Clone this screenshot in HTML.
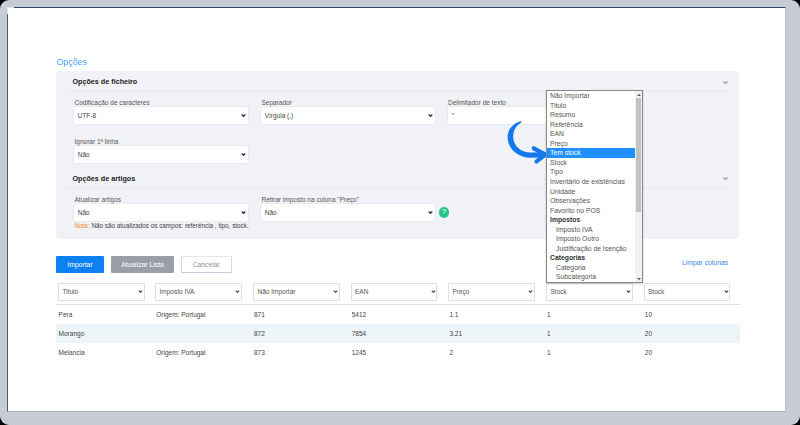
<!DOCTYPE html>
<html><head><meta charset="utf-8">
<style>
*{margin:0;padding:0;box-sizing:border-box}
html,body{width:800px;height:425px;overflow:hidden;background:#000}
body{font-family:"Liberation Sans",sans-serif;position:relative}
.frame{position:absolute;left:0;top:0;width:800px;height:425px;border-radius:9px;background:#c7ccd4}
.screen{position:absolute;left:7px;top:7px;width:779px;height:405px;background:#fff;border-top:1px solid #34486a;border-left:1px solid #4a5d7c;border-right:1px solid #bdc3cc;border-bottom:1px solid #aab1bc}
.a{position:absolute;white-space:nowrap}
.t{position:absolute;white-space:nowrap;line-height:1}
.panel{position:absolute;left:56px;top:71px;width:683px;height:168px;background:#f1f2f7;border-radius:4px}
.sep{position:absolute;height:2px;background:#ebedf2}
.h{font-weight:bold;font-size:7.2px;color:#222}
.lbl{font-size:6.5px;color:#555}
.inp{position:absolute;background:#fff;box-shadow:0 0 0 0.6px #e3e5eb,0 0 1.5px rgba(0,0,0,.08);border-radius:1.5px}
.inp span{position:absolute;left:3.7px;top:5.8px;font-size:6.5px;color:#444;line-height:1}
.chev{position:absolute;width:5px;height:3px}
.btn{position:absolute;top:256px;height:17px;border-radius:1px;font-size:6.8px;text-align:center;line-height:17px}
.sel{position:absolute;top:283px;height:17.5px;width:86.5px;background:#fff;border:1px solid #dcdfe4;border-radius:1px}
.sel span{position:absolute;left:3.5px;top:5.2px;font-size:6.5px;color:#555;line-height:1}
.cell{position:absolute;font-size:6.5px;color:#444;line-height:1}
.dd{position:absolute;left:546px;top:90px;width:97px;height:193px;background:#fff;border:1px solid #85888c;box-shadow:0 1px 2px rgba(0,0,0,.2)}
.it{position:absolute;left:3px;height:9.55px;font-size:6.8px;color:#5a5353;line-height:9.55px;white-space:nowrap}
</style></head>
<body>
<div class="frame"></div>
<div class="screen"></div>
<div class="a" style="left:7px;top:7px;width:7px;height:7px;background:#fff;border-top:1px solid #e3e6ea;border-left:1px solid #e3e6ea"></div>

<div class="t" style="left:56.5px;top:58px;font-size:8.8px;color:#4b9ff2">Opções</div>

<div class="panel"></div>
<div class="t h" style="left:72.5px;top:78px">Opções de ficheiro</div>
<div class="sep" style="left:67px;top:90px;width:662px"></div>
<svg class="chev" style="left:723px;top:80.5px" viewBox="0 0 5 3"><path d="M0.5 0.5 L2.5 2.5 L4.5 0.5" stroke="#9a9ca4" stroke-width="1.1" fill="none"/></svg>

<div class="t lbl" style="left:74.5px;top:100px">Codificação de caracteres</div>
<div class="inp" style="left:74px;top:107px;width:174px;height:17px"><span>UTF-8</span></div>
<svg class="chev" style="left:241px;top:114px" viewBox="0 0 5 3"><path d="M0.7 0.6 L2.5 2.3 L4.3 0.6" stroke="#333" stroke-width="1.4" fill="none"/></svg>

<div class="t lbl" style="left:261.5px;top:100px">Separador</div>
<div class="inp" style="left:261px;top:107px;width:174px;height:17px"><span>Vírgula (,)</span></div>
<svg class="chev" style="left:428px;top:114px" viewBox="0 0 5 3"><path d="M0.7 0.6 L2.5 2.3 L4.3 0.6" stroke="#333" stroke-width="1.4" fill="none"/></svg>

<div class="t lbl" style="left:448px;top:100px">Delimitador de texto</div>
<div class="inp" style="left:448px;top:107px;width:174px;height:17px"><span>"</span></div>

<div class="t lbl" style="left:74.5px;top:139px">Ignorar 1ª linha</div>
<div class="inp" style="left:74px;top:146px;width:174px;height:17px"><span>Não</span></div>
<svg class="chev" style="left:241px;top:153px" viewBox="0 0 5 3"><path d="M0.7 0.6 L2.5 2.3 L4.3 0.6" stroke="#333" stroke-width="1.4" fill="none"/></svg>

<div class="t h" style="left:72.5px;top:175px">Opções de artigos</div>
<div class="sep" style="left:67px;top:187px;width:662px"></div>
<svg class="chev" style="left:723px;top:177px" viewBox="0 0 5 3"><path d="M0.5 0.5 L2.5 2.5 L4.5 0.5" stroke="#9a9ca4" stroke-width="1.1" fill="none"/></svg>

<div class="t lbl" style="left:74.5px;top:196.5px">Atualizar artigos</div>
<div class="inp" style="left:74px;top:204px;width:174px;height:16.5px"><span>Não</span></div>
<svg class="chev" style="left:241px;top:211px" viewBox="0 0 5 3"><path d="M0.7 0.6 L2.5 2.3 L4.3 0.6" stroke="#333" stroke-width="1.4" fill="none"/></svg>
<div class="t lbl" style="left:74.5px;top:222.8px;color:#444;font-size:6.35px"><span style="color:#f08a24">Nota:</span> Não são atualizados os campos: referência , tipo, stock.</div>

<div class="t lbl" style="left:261.5px;top:196.5px">Retirar imposto na coluna "Preço"</div>
<div class="inp" style="left:261px;top:204px;width:174px;height:16.5px"><span>Não</span></div>
<svg class="chev" style="left:428px;top:211px" viewBox="0 0 5 3"><path d="M0.7 0.6 L2.5 2.3 L4.3 0.6" stroke="#333" stroke-width="1.4" fill="none"/></svg>
<div class="a" style="left:438.6px;top:207.1px;width:10.6px;height:10.6px;border-radius:50%;background:#25c68b;color:#fff;font-size:7.5px;text-align:center;line-height:10.6px">?</div>

<div class="btn" style="left:56px;width:48px;background:#0d80f2;color:#fff">Importar</div>
<div class="btn" style="left:111px;width:63px;background:#9a9ea6;color:#fff">Atualizar Lista</div>
<div class="btn" style="left:181px;width:50.5px;background:#fff;border:1px solid #d3d9e4;border-top-color:#e2e6ed;border-bottom-color:#c3cbda;color:#8c93a3;line-height:15px">Cancelar</div>

<div class="t" style="left:682px;top:260px;font-size:6.8px;color:#3d86e6">Limpar colunas</div>

<!-- table -->
<div class="a" style="left:56px;top:304px;width:684px;height:1px;background:#d9dce1"></div>
<div class="a" style="left:56px;top:324px;width:684px;height:19px;background:#edf5f9"></div>

<div class="sel" style="left:58px"><span>Titulo</span></div>
<svg class="chev" style="left:138.0px;top:289.8px" viewBox="0 0 5 3"><path d="M0.8 0.6 L2.5 2.3 L4.2 0.6" stroke="#444" stroke-width="1.15" fill="none"/></svg>
<div class="sel" style="left:155px"><span>Imposto IVA</span></div>
<svg class="chev" style="left:235.0px;top:289.8px" viewBox="0 0 5 3"><path d="M0.8 0.6 L2.5 2.3 L4.2 0.6" stroke="#444" stroke-width="1.15" fill="none"/></svg>
<div class="sel" style="left:253px"><span>Não Importar</span></div>
<svg class="chev" style="left:333.0px;top:289.8px" viewBox="0 0 5 3"><path d="M0.8 0.6 L2.5 2.3 L4.2 0.6" stroke="#444" stroke-width="1.15" fill="none"/></svg>
<div class="sel" style="left:350.5px"><span>EAN</span></div>
<svg class="chev" style="left:430.5px;top:289.8px" viewBox="0 0 5 3"><path d="M0.8 0.6 L2.5 2.3 L4.2 0.6" stroke="#444" stroke-width="1.15" fill="none"/></svg>
<div class="sel" style="left:448px"><span>Preço</span></div>
<svg class="chev" style="left:528.0px;top:289.8px" viewBox="0 0 5 3"><path d="M0.8 0.6 L2.5 2.3 L4.2 0.6" stroke="#444" stroke-width="1.15" fill="none"/></svg>
<div class="sel" style="left:546px"><span>Stock</span></div>
<svg class="chev" style="left:626.0px;top:289.8px" viewBox="0 0 5 3"><path d="M0.8 0.6 L2.5 2.3 L4.2 0.6" stroke="#444" stroke-width="1.15" fill="none"/></svg>
<div class="sel" style="left:643.5px"><span>Stock</span></div>
<svg class="chev" style="left:723.5px;top:289.8px" viewBox="0 0 5 3"><path d="M0.8 0.6 L2.5 2.3 L4.2 0.6" stroke="#444" stroke-width="1.15" fill="none"/></svg>
<div class="cell" style="left:58.6px;top:312.0px">Pera</div>
<div class="cell" style="left:156.3px;top:312.0px">Origem: Portugal</div>
<div class="cell" style="left:254.0px;top:312.0px">871</div>
<div class="cell" style="left:351.7px;top:312.0px">5412</div>
<div class="cell" style="left:449.4px;top:312.0px">1.1</div>
<div class="cell" style="left:547.1px;top:312.0px">1</div>
<div class="cell" style="left:644.8px;top:312.0px">10</div>
<div class="cell" style="left:58.6px;top:331.0px">Morango</div>
<div class="cell" style="left:254.0px;top:331.0px">872</div>
<div class="cell" style="left:351.7px;top:331.0px">7854</div>
<div class="cell" style="left:449.4px;top:331.0px">3.21</div>
<div class="cell" style="left:547.1px;top:331.0px">1</div>
<div class="cell" style="left:644.8px;top:331.0px">20</div>
<div class="cell" style="left:58.6px;top:350.0px">Melancia</div>
<div class="cell" style="left:156.3px;top:350.0px">Origem: Portugal</div>
<div class="cell" style="left:254.0px;top:350.0px">873</div>
<div class="cell" style="left:351.7px;top:350.0px">1245</div>
<div class="cell" style="left:449.4px;top:350.0px">2</div>
<div class="cell" style="left:547.1px;top:350.0px">1</div>
<div class="cell" style="left:644.8px;top:350.0px">20</div>
<svg class="a" style="left:500px;top:115px" width="50" height="50" viewBox="0 0 50 50"><path d="M20.3 6.2 C 12 9, 7.6 15, 7.6 22 C 7.6 34, 18 42.7, 31 42.7 L 45 42.4 L 45 37.2 L 31 37.6 C 20 37.6, 13.2 30, 13.2 22 C 13.2 15.5, 16 10.5, 21.2 7.8 C 21.8 7.2, 21 5.8, 20.3 6.2 Z" fill="#1479ee"/><path d="M33.8 33.3 L45.5 39.6 L36.5 46.4" stroke="#1479ee" stroke-width="4.2" fill="none" stroke-linecap="round" stroke-linejoin="round"/></svg>
<div class="dd">
<div class="it" style="top:0.00px">Não Importar</div>
<div class="it" style="top:9.55px">Titulo</div>
<div class="it" style="top:19.10px">Resumo</div>
<div class="it" style="top:28.65px">Referência</div>
<div class="it" style="top:38.20px">EAN</div>
<div class="it" style="top:47.75px">Preço</div>
<div class="a" style="left:0;top:57.30px;width:88.5px;height:9.55px;background:#1e90ff"></div>
<div class="it" style="top:57.30px;color:#fff">Tem stock</div>
<div class="it" style="top:66.85px">Stock</div>
<div class="it" style="top:76.40px">Tipo</div>
<div class="it" style="top:85.95px">Inventário de existências</div>
<div class="it" style="top:95.50px">Unidade</div>
<div class="it" style="top:105.05px">Observações</div>
<div class="it" style="top:114.60px">Favorito no POS</div>
<div class="it" style="top:124.15px;font-weight:bold;color:#333">Impostos</div>
<div class="it" style="top:133.70px;left:9px">Imposto IVA</div>
<div class="it" style="top:143.25px;left:9px">Imposto Outro</div>
<div class="it" style="top:152.80px;left:9px">Justificação de Isenção</div>
<div class="it" style="top:162.35px;font-weight:bold;color:#333">Categorias</div>
<div class="it" style="top:171.90px;left:9px">Categoria</div>
<div class="it" style="top:181.45px;left:9px">Subcategoria</div>
<div class="a" style="right:0;top:0;width:7px;height:191px;background:#f1f1f1"></div>
<div class="a" style="right:1px;top:7px;width:5px;height:114px;background:#c1c1c1"></div>
<div class="a" style="right:1.5px;top:2.5px;width:0;height:0;border-left:2px solid transparent;border-right:2px solid transparent;border-bottom:2px solid #505050"></div>
<div class="a" style="right:1.5px;bottom:2.5px;width:0;height:0;border-left:2px solid transparent;border-right:2px solid transparent;border-top:2px solid #505050"></div>
</div>
</body></html>
